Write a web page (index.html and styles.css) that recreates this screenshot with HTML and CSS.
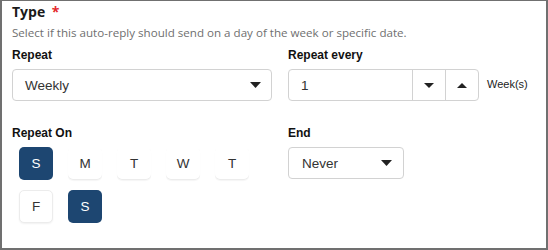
FILE: index.html
```html
<!DOCTYPE html>
<html>
<head>
<meta charset="utf-8">
<link rel="stylesheet" href="styles.css">
</head>
<body>
<div class="frame">
  <div class="title">Type <span class="req">*</span></div>
  <div class="desc">Select if this auto-reply should send on a day of the week or specific date.</div>
  <div class="grid">
    <div class="field">
      <div class="label">Repeat</div>
      <div class="select wide">
        <span class="value">Weekly</span>
        <svg class="caret" width="11" height="6" viewBox="0 0 11 6"><polygon points="0,0 11,0 5.5,6" fill="#222"/></svg>
      </div>
    </div>
    <div class="field">
      <div class="label">Repeat every</div>
      <div class="num-row">
        <div class="number">
          <span class="num-value">1</span>
          <span class="step"><svg width="10" height="5" viewBox="0 0 10 5"><polygon points="0,0 10,0 5,5" fill="#222"/></svg></span>
          <span class="step"><svg width="10" height="5" viewBox="0 0 10 5"><polygon points="0,5 10,5 5,0" fill="#222"/></svg></span>
        </div>
        <span class="unit">Week(s)</span>
      </div>
    </div>
    <div class="field">
      <div class="label">Repeat On</div>
      <div class="days">
        <span class="day on">S</span>
        <span class="day">M</span>
        <span class="day">T</span>
        <span class="day">W</span>
        <span class="day">T</span>
        <span class="day bordered">F</span>
        <span class="day on">S</span>
      </div>
    </div>
    <div class="field">
      <div class="label">End</div>
      <div class="select narrow">
        <span class="value">Never</span>
        <svg class="caret" width="11" height="6" viewBox="0 0 11 6"><polygon points="0,0 11,0 5.5,6" fill="#222"/></svg>
      </div>
    </div>
  </div>
</div>
</body>
</html>
```

FILE: styles.css
```css
html, body {
  margin: 0;
  padding: 0;
  background: #ffffff;
}
.frame {
  box-sizing: border-box;
  width: 548px;
  height: 250px;
  border: 2px solid #707070;
  border-top-width: 1px;
  padding: 1px 0 0 10px;
  font-family: "Liberation Sans", Arial, sans-serif;
  color: #111;
}
.title {
  font-family: "Open Sans", "Noto Sans", sans-serif;
  font-weight: 700;
  font-size: 14px;
  line-height: 19px;
  color: #1a1a1a;
}
.req {
  color: #e4282c;
  margin-left: 3px;
}
.desc {
  font-family: "Open Sans", "Noto Sans", sans-serif;
  font-size: 11.6px;
  line-height: 16px;
  color: #6f6f6f;
  margin-top: 4px;
}
.grid {
  display: grid;
  grid-template-columns: 260px 1fr;
  column-gap: 16px;
  row-gap: 25px;
  margin-top: 7px;
}
.label {
  font-weight: 700;
  font-size: 12px;
  line-height: 14px;
  color: #111;
  margin-bottom: 7px;
}
.select {
  box-sizing: border-box;
  height: 32px;
  border: 1px solid #d2d2d2;
  border-radius: 4px;
  display: flex;
  align-items: center;
  justify-content: space-between;
  font-size: 13.5px;
  color: #333;
}
.select.wide {
  width: 260px;
  padding: 0 10px 0 12px;
}
.select.narrow {
  width: 116px;
  padding: 0 11px 0 13px;
}
.num-row {
  display: flex;
  align-items: center;
  gap: 8px;
}
.number {
  box-sizing: border-box;
  width: 191px;
  height: 32px;
  border: 1px solid #d2d2d2;
  border-radius: 4px;
  display: flex;
  align-items: stretch;
  font-size: 13.5px;
  color: #333;
}
.num-value {
  flex: 1;
  display: flex;
  align-items: center;
  padding-left: 12px;
}
.step {
  width: 32px;
  border-left: 1px solid #d2d2d2;
  display: flex;
  align-items: center;
  justify-content: center;
}
.unit {
  font-size: 11px;
  color: #222;
  margin-top: -3px;
}
.days {
  display: flex;
  flex-wrap: wrap;
  column-gap: 15px;
  row-gap: 10px;
  padding-left: 7px;
  margin-top: 1px;
}
.day {
  box-sizing: border-box;
  width: 34px;
  height: 33px;
  border-radius: 5px;
  display: flex;
  align-items: center;
  justify-content: center;
  font-size: 13.5px;
  color: #333;
  background: #fff;
  box-shadow: inset 0 -1px 0 #ececec, 0 1px 1px rgba(0,0,0,0.04);
}
.day.bordered {
  border: 1px solid #ececec;
  box-shadow: 0 1px 2px rgba(0,0,0,0.06);
}
.day.on {
  background: #1d4671;
  color: #fff;
  box-shadow: none;
}
```
